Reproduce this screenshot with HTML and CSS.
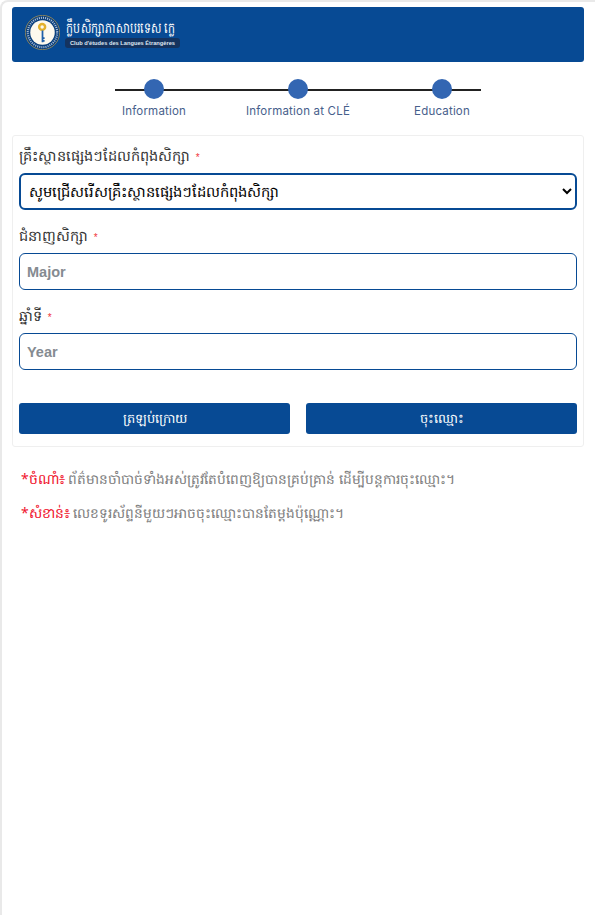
FILE: index.html
```html
<!DOCTYPE html>
<html lang="km">
<head>
<meta charset="utf-8">
<title>Education</title>
<link rel="stylesheet" href="styles.css">
</head>
<body>
<div class="frame">
  <header class="banner">
    <svg class="logo" viewBox="0 0 50 50" aria-hidden="true">
      <circle cx="25" cy="25" r="24.5" fill="#0a3f7c" stroke="#b59a52" stroke-width="1"/>
      <circle cx="25" cy="25" r="21" fill="none" stroke="#a9bdd8" stroke-width="3" stroke-dasharray="1.5 1.5"/>
      <circle cx="25" cy="25" r="17.5" fill="#fdf9ee"/>
      <circle cx="24.500" cy="17" r="6" fill="#e3b12c"/>
      <circle cx="24.500" cy="17" r="2.500" fill="#fdf9ee"/>
      <path d="M25 22v17M25 33h3M25 37h3" fill="none" stroke="#1f5fa8" stroke-width="2.500"/>
    </svg>
    <div class="brand">
      <div class="brand-kh">ក្លឹបសិក្សាភាសាបរទេស ក្លេ</div>
      <div class="brand-fr">Club d'études des Langues Étrangères</div>
    </div>
  </header>

  <ol class="stepper">
    <li class="step"><span class="dot"></span><span class="step-label">Information</span></li>
    <li class="step"><span class="dot"></span><span class="step-label">Information at CLÉ</span></li>
    <li class="step"><span class="dot"></span><span class="step-label">Education</span></li>
  </ol>

  <form class="card">
    <div class="field">
      <label class="label" for="school">គ្រឹះស្ថានផ្សេងៗដែលកំពុងសិក្សា <span class="req">*</span></label>
      <select class="select" id="school">
        <option>សូមជ្រើសរើសគ្រឹះស្ថានផ្សេងៗដែលកំពុងសិក្សា</option>
      </select>
    </div>
    <div class="field">
      <label class="label" for="major">ជំនាញសិក្សា <span class="req">*</span></label>
      <input class="input" id="major" type="text" placeholder="Major">
    </div>
    <div class="field">
      <label class="label" for="year">ឆ្នាំទី <span class="req">*</span></label>
      <input class="input" id="year" type="text" placeholder="Year">
    </div>
    <div class="actions">
      <button class="btn" type="button">ត្រឡប់ក្រោយ</button>
      <button class="btn" type="button">ចុះឈ្មោះ</button>
    </div>
  </form>

  <div class="notes">
    <p class="note"><span class="note-key">*ចំណាំ៖</span> ព័ត៌មានចាំបាច់ទាំងអស់ត្រូវតែបំពេញឱ្យបានគ្រប់គ្រាន់ ដើម្បីបន្តការចុះឈ្មោះ។</p>
    <p class="note"><span class="note-key">*សំខាន់៖</span> លេខទូរស័ព្ទនីមួយៗអាចចុះឈ្មោះបានតែម្តងប៉ុណ្ណោះ។</p>
  </div>
</div>
</body>
</html>
```
FILE: styles.css
```css
* { box-sizing: border-box; }
html, body { margin: 0; height: 100%; }
body { background: #fff; font-family: "Noto Sans", "Liberation Sans", sans-serif; overflow: hidden; }
.frame {
  height: 915px;
  padding: 5px 11px 0 10px;
  border: 2px solid #e9e9e9;
  border-right: 0;
  border-bottom: 0;
  border-top-left-radius: 8px;
}
.banner {
  height: 55px;
  background: #074a94;
  border-radius: 3px;
  display: flex;
  align-items: center;
  gap: 5px;
  padding: 0 0 4px 13px;
}
.logo { width: 35px; height: 35px; flex: none; }
.brand { display: flex; flex-direction: column; align-items: flex-start; }
.brand-kh {
  color: #fff;
  font-size: 15px;
  line-height: 21px;
  white-space: nowrap;
  transform: scaleX(.73);
  transform-origin: left center;
  margin-left: 1px;
}
.brand-fr {
  background: #14335f;
  color: #dfe6f0;
  font: 700 5.7px/10px "Liberation Sans", sans-serif;
  padding: 0 5px;
  border-radius: 3px;
  white-space: nowrap;
}
.stepper {
  list-style: none;
  margin: 17px 0 0 103px;
  width: 366px;
  height: 56px;
  display: flex;
  justify-content: space-between;
  background: linear-gradient(#222, #222) 0 10px / 100% 2px no-repeat;
  padding: 0 29px;
}
.step { width: 20px; display: flex; flex-direction: column; align-items: center; }
.dot { width: 20px; height: 20px; border-radius: 50%; background: #3366b2; flex: none; }
.step-label {
  margin-top: 4px;
  font: 11.5px/16px Inter, sans-serif;
  letter-spacing: .2px;
  color: #47608c;
  white-space: nowrap;
}
.card {
  border: 1px solid #efefef;
  border-radius: 3px;
  padding: 8px 6px 12px;
  height: 312px;
}
.field { margin-bottom: 14px; }
.label {
  display: block;
  font-size: 14.5px;
  line-height: 23px;
  color: #333;
  height: 29px;
}
.req { color: #f0353b; font: 10px/1 "Liberation Sans", sans-serif; margin-left: 2px; }
.select, .input {
  display: block;
  width: 100%;
  background: #fff;
  color: #222;
  font-family: "Noto Sans", "Liberation Sans", sans-serif;
  border-radius: 6px;
  outline: none;
}
.select { height: 37px; border: 2px solid #074a94; font-size: 14.7px; font-weight: 500; color: #000; padding: 0 4px 2px; }
.input { height: 37px; border: 1px solid #074a94; font-size: 14.5px; font-weight: 700; padding: 0 7px 2px; }
.input::placeholder { color: #858b91; opacity: 1; font-family: "Liberation Sans", sans-serif; }
.actions { display: flex; gap: 16px; margin-top: 33px; }
.btn {
  flex: 1;
  height: 31px;
  border: 0;
  border-radius: 3px;
  background: #074a94;
  color: #fff;
  font-family: inherit;
  font-size: 13px;
  font-weight: 500;
}
.notes { padding: 21px 0 0 9px; }
.note { margin: 0 0 11px; font-size: 13.8px; line-height: 22px; color: #7e7e7e; white-space: nowrap; }
.note + .note { margin-top: 12px; }
.note-key { color: #f0142d; font-size: 14px; }
```
